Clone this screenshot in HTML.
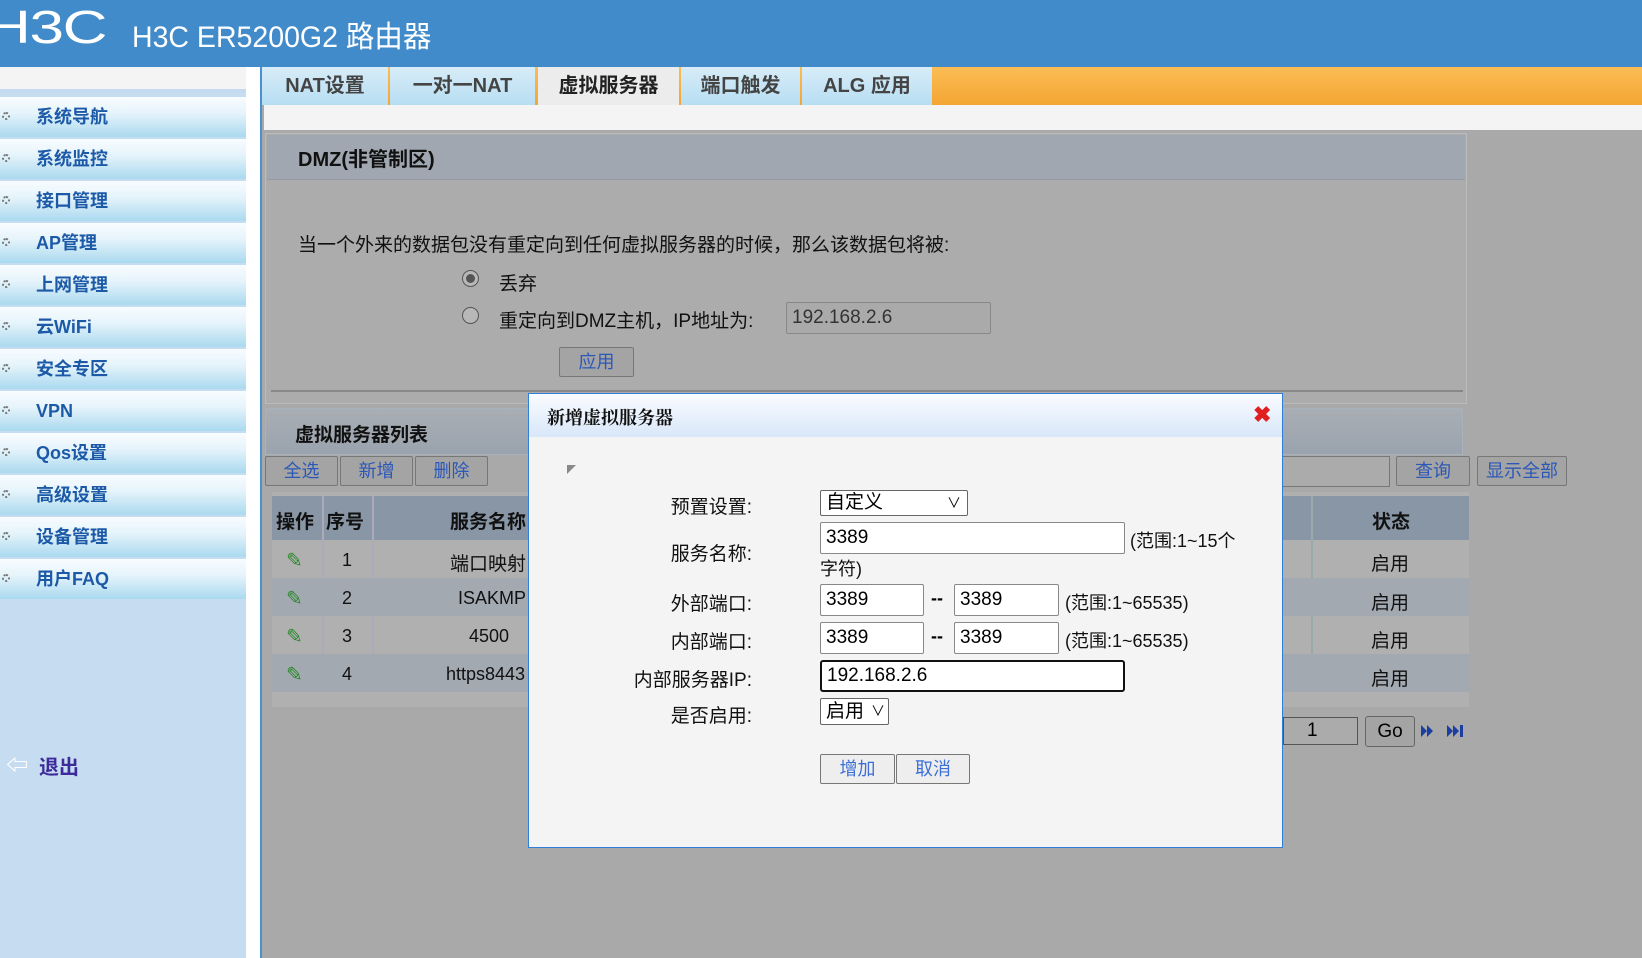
<!DOCTYPE html>
<html><head><meta charset="utf-8">
<style>
*{margin:0;padding:0;box-sizing:border-box}
body{width:1642px;height:958px;position:relative;overflow:hidden;background:#a9a9a9;font-family:"Liberation Sans","Noto Sans CJK SC",sans-serif;}
.a{position:absolute}
#hdr{left:0;top:0;width:1642px;height:67px;background:#418bca;color:#fff}
#side{left:0;top:67px;width:246px;height:891px;background:#c6dcf0}
.item{position:absolute;left:0;width:246px;height:40px;background:linear-gradient(#f8fcff,#e6f4fb 40%,#aad9ef);color:#1c5aa8;font-weight:bold;font-size:18px;line-height:40px;padding-left:36px}
.item i{position:absolute;left:2px;top:15px;width:8px;height:8px;border:2px dotted #777;border-radius:50%}
.tab{position:absolute;top:67px;height:38px;background:linear-gradient(#d8ecf8,#b6def2);font-weight:bold;font-size:20px;color:#444;text-align:center;line-height:38px}
.inp{position:absolute;background:#fff;border:1px solid #888;border-radius:2px;font-size:19px;padding-left:5px;color:#000}
.btn{position:absolute;background:#eee;border:1px solid #777;border-radius:2px;color:#3c6fd8;font-size:18px;text-align:center}
.gbtn{position:absolute;background:#a4a4a4;border:1px solid #777;border-radius:2px;color:#2b57b8;font-size:18px;text-align:center}
.lbl{position:absolute;font-size:19px;color:#111;text-align:right;width:240px}
</style></head><body>
<div id="hdr" class="a">
 <div class="a" style="left:-14px;top:0px;font-size:46px;font-weight:normal;letter-spacing:-1px;transform:scaleX(1.35);transform-origin:left">H3C</div>
 <div class="a" style="left:132px;top:12px;font-size:30px;transform:scaleX(0.95);transform-origin:left">H3C ER5200G2 路由器</div>
</div>
<div id="side" class="a">
 <div class="a" style="left:0;top:0;width:246px;height:25px;background:#f4f4f4"></div>
 <div class="a" style="left:0;top:22px;width:246px;height:3px;background:#c3daf0"></div>
</div>
<div class="item" style="top:97px"><i></i>系统导航</div>
<div class="item" style="top:139px"><i></i>系统监控</div>
<div class="item" style="top:181px"><i></i>接口管理</div>
<div class="item" style="top:223px"><i></i>AP管理</div>
<div class="item" style="top:265px"><i></i>上网管理</div>
<div class="item" style="top:307px"><i></i>云WiFi</div>
<div class="item" style="top:349px"><i></i>安全专区</div>
<div class="item" style="top:391px"><i></i>VPN</div>
<div class="item" style="top:433px"><i></i>Qos设置</div>
<div class="item" style="top:475px"><i></i>高级设置</div>
<div class="item" style="top:517px"><i></i>设备管理</div>
<div class="item" style="top:559px"><i></i>用户FAQ</div>
<div class="a" style="left:6px;top:748px;color:#fff;font-size:22px;font-weight:bold">⇦</div>
<div class="a" style="left:39px;top:751px;color:#3e2b9b;font-size:20px;font-weight:bold">退出</div>
<div class="a" style="left:246px;top:67px;width:16px;height:891px;background:#fff;border-right:2px solid #4a8fd0"></div>
<div class="a" style="left:262px;top:67px;width:1380px;height:38px;background:linear-gradient(#fbbd55,#f4a532)"></div>
<div class="tab" style="left:262px;width:126px">NAT设置</div>
<div class="tab" style="left:390px;width:145px">一对一NAT</div>
<div class="tab" style="left:538px;width:141px;background:#ececec;color:#222">虚拟服务器</div>
<div class="tab" style="left:681px;width:119px">端口触发</div>
<div class="tab" style="left:802px;width:130px">ALG 应用</div>
<div class="a" style="left:264px;top:105px;width:1378px;height:25px;background:#f4f4f4"></div>
<div class="a" style="left:265px;top:133px;width:1202px;height:271px;border:1px solid #bbb;background:#acacac"></div>
<div class="a" style="left:267px;top:135px;width:1198px;height:45px;background:#a0a7b0;border-bottom:1px solid #939ba6"></div>
<div class="a" style="left:298px;top:143px;font-size:20px;font-weight:bold;color:#111">DMZ(非管制区)</div>
<div class="a" style="left:298px;top:230px;font-size:19px;color:#111">当一个外来的数据包没有重定向到任何虚拟服务器的时候，那么该数据包将被:</div>
<div class="a" style="left:462px;top:270px;width:17px;height:17px;border:1px solid #555;border-radius:50%;background:#b8b8b8"><div class="a" style="left:3px;top:3px;width:9px;height:9px;border-radius:50%;background:#555"></div></div>
<div class="a" style="left:499px;top:269px;font-size:19px;color:#111">丢弃</div>
<div class="a" style="left:462px;top:307px;width:17px;height:17px;border:1px solid #555;border-radius:50%;background:#b8b8b8"></div>
<div class="a" style="left:499px;top:306px;font-size:19px;color:#111">重定向到DMZ主机，IP地址为:</div>
<div class="inp" style="left:786px;top:302px;width:205px;height:32px;background:#aaa;color:#333;line-height:30px">192.168.2.6</div>
<div class="gbtn" style="left:559px;top:347px;width:75px;height:30px;line-height:28px">应用</div>
<div class="a" style="left:271px;top:390px;width:1192px;height:2px;background:#888"></div>
<div class="a" style="left:265px;top:408px;width:1198px;height:47px;background:linear-gradient(#a9aeb4,#9aa3ae);border:1px solid #a8b2bc"></div>
<div class="a" style="left:295px;top:420px;font-size:19px;font-weight:bold;color:#111">虚拟服务器列表</div>
<div class="gbtn" style="left:265px;top:456px;width:73px;height:30px;line-height:28px">全选</div>
<div class="gbtn" style="left:340px;top:456px;width:73px;height:30px;line-height:28px">新增</div>
<div class="gbtn" style="left:415px;top:456px;width:73px;height:30px;line-height:28px">删除</div>
<div class="a" style="left:1270px;top:456px;width:120px;height:31px;border:1px solid #777;background:#ababab"></div>
<div class="gbtn" style="left:1396px;top:456px;width:74px;height:30px;line-height:28px">查询</div>
<div class="gbtn" style="left:1477px;top:456px;width:90px;height:30px;line-height:28px">显示全部</div>
<div class="a" style="left:272px;top:492px;width:1197px;height:215px;background:#b0b0b0"></div>
<div class="a" style="left:272px;top:496px;width:1197px;height:44px;background:#8996a5"></div>
<div class="a" style="left:322px;top:496px;width:2px;height:196px;background:#aab"></div>
<div class="a" style="left:372px;top:496px;width:2px;height:196px;background:#aab"></div>
<div class="a" style="left:1311px;top:496px;width:2px;height:196px;background:#9aa"></div>
<div class="a" style="left:276px;top:507px;font-size:19px;font-weight:bold;color:#111">操作</div>
<div class="a" style="left:326px;top:507px;font-size:19px;font-weight:bold;color:#111">序号</div>
<div class="a" style="left:450px;top:507px;font-size:19px;font-weight:bold;color:#111">服务名称</div>
<div class="a" style="left:1372px;top:507px;font-size:19px;font-weight:bold;color:#111">状态</div>
<div class="a" style="left:272px;top:578px;width:1197px;height:38px;background:#a3a9b1"></div>
<div class="a" style="left:272px;top:654px;width:1197px;height:38px;background:#a3a9b1"></div>
<div class="a" style="left:286px;top:548px;font-size:20px;color:#2e8a2e">✎</div>
<div class="a" style="left:286px;top:586px;font-size:20px;color:#2e8a2e">✎</div>
<div class="a" style="left:286px;top:624px;font-size:20px;color:#2e8a2e">✎</div>
<div class="a" style="left:286px;top:662px;font-size:20px;color:#2e8a2e">✎</div>
<div class="a" style="left:342px;top:550px;font-size:18px;color:#111">1</div>
<div class="a" style="left:342px;top:588px;font-size:18px;color:#111">2</div>
<div class="a" style="left:342px;top:626px;font-size:18px;color:#111">3</div>
<div class="a" style="left:342px;top:664px;font-size:18px;color:#111">4</div>
<div class="a" style="left:450px;top:549px;font-size:19px;color:#111">端口映射</div>
<div class="a" style="left:458px;top:588px;font-size:18px;color:#111">ISAKMP</div>
<div class="a" style="left:469px;top:626px;font-size:18px;color:#111">4500</div>
<div class="a" style="left:446px;top:664px;font-size:18px;color:#111">https8443</div>
<div class="a" style="left:1371px;top:549px;font-size:19px;color:#111">启用</div>
<div class="a" style="left:1371px;top:588px;font-size:19px;color:#111">启用</div>
<div class="a" style="left:1371px;top:626px;font-size:19px;color:#111">启用</div>
<div class="a" style="left:1371px;top:664px;font-size:19px;color:#111">启用</div>
<div class="a" style="left:1283px;top:717px;width:75px;height:28px;border:1px solid #555;background:#ababab;font-size:19px;padding-left:23px;line-height:26px">1</div>
<div class="a" style="left:1365px;top:716px;width:50px;height:31px;border:1px solid #666;border-radius:3px;background:#a4a4a4;font-size:19px;text-align:center;line-height:29px">Go</div>
<svg class="a" style="left:1421px;top:724px" width="50" height="14"><path d="M0 1L6 7L0 13ZM6 1L12 7L6 13Z" fill="#1a3fa0"/><path d="M26 1L32 7L26 13ZM32 1L38 7L32 13Z" fill="#1a3fa0"/><rect x="39" y="1" width="3" height="12" fill="#1a3fa0"/></svg>
<div class="a" style="left:528px;top:393px;width:755px;height:455px;border:1px solid #2f7fd8;background:#f4f4f4">
 <div class="a" style="left:0;top:0;width:753px;height:43px;background:linear-gradient(#fafcff,#d8e7f9)"></div>
 <div class="a" style="left:18px;top:10px;font-size:18px;font-weight:bold;font-family:'Liberation Serif','Noto Serif CJK SC',serif;color:#111">新增虚拟服务器</div>
 <div class="a" style="left:724px;top:8px;font-size:22px;font-weight:bold;color:#e02020">✖</div>
 <div class="a" style="left:38px;top:69px;font-size:9px;color:#888">◤</div>
</div>
<div class="lbl" style="left:512px;top:492px">预置设置:</div>
<div class="lbl" style="left:512px;top:539px">服务名称:</div>
<div class="lbl" style="left:512px;top:589px">外部端口:</div>
<div class="lbl" style="left:512px;top:627px">内部端口:</div>
<div class="lbl" style="left:512px;top:665px">内部服务器IP:</div>
<div class="lbl" style="left:512px;top:701px">是否启用:</div>
<div class="inp" style="left:820px;top:490px;width:148px;height:26px;line-height:24px;border-color:#666">自定义<span class="a" style="right:6px;top:0;font-size:14px">∨</span></div>
<div class="inp" style="left:820px;top:522px;width:305px;height:32px;line-height:30px">3389</div>
<div class="a" style="left:1130px;top:527px;font-size:18px;color:#111">(范围:1~15个</div>
<div class="a" style="left:820px;top:555px;font-size:18px;color:#111">字符)</div>
<div class="inp" style="left:820px;top:584px;width:104px;height:32px;line-height:30px">3389</div>
<div class="a" style="left:931px;top:588px;font-size:18px;font-weight:bold">--</div>
<div class="inp" style="left:954px;top:584px;width:105px;height:32px;line-height:30px">3389</div>
<div class="a" style="left:1065px;top:589px;font-size:18px;color:#111">(范围:1~65535)</div>
<div class="inp" style="left:820px;top:622px;width:104px;height:32px;line-height:30px">3389</div>
<div class="a" style="left:931px;top:626px;font-size:18px;font-weight:bold">--</div>
<div class="inp" style="left:954px;top:622px;width:105px;height:32px;line-height:30px">3389</div>
<div class="a" style="left:1065px;top:627px;font-size:18px;color:#111">(范围:1~65535)</div>
<div class="inp" style="left:820px;top:660px;width:305px;height:32px;line-height:27px;border:2px solid #111;border-radius:3px">192.168.2.6</div>
<div class="inp" style="left:820px;top:698px;width:69px;height:27px;line-height:25px;border-color:#666">启用<span class="a" style="right:3px;top:0;font-size:14px">∨</span></div>
<div class="btn" style="left:820px;top:754px;width:75px;height:30px;line-height:28px">增加</div>
<div class="btn" style="left:896px;top:754px;width:74px;height:30px;line-height:28px">取消</div>
</body></html>
